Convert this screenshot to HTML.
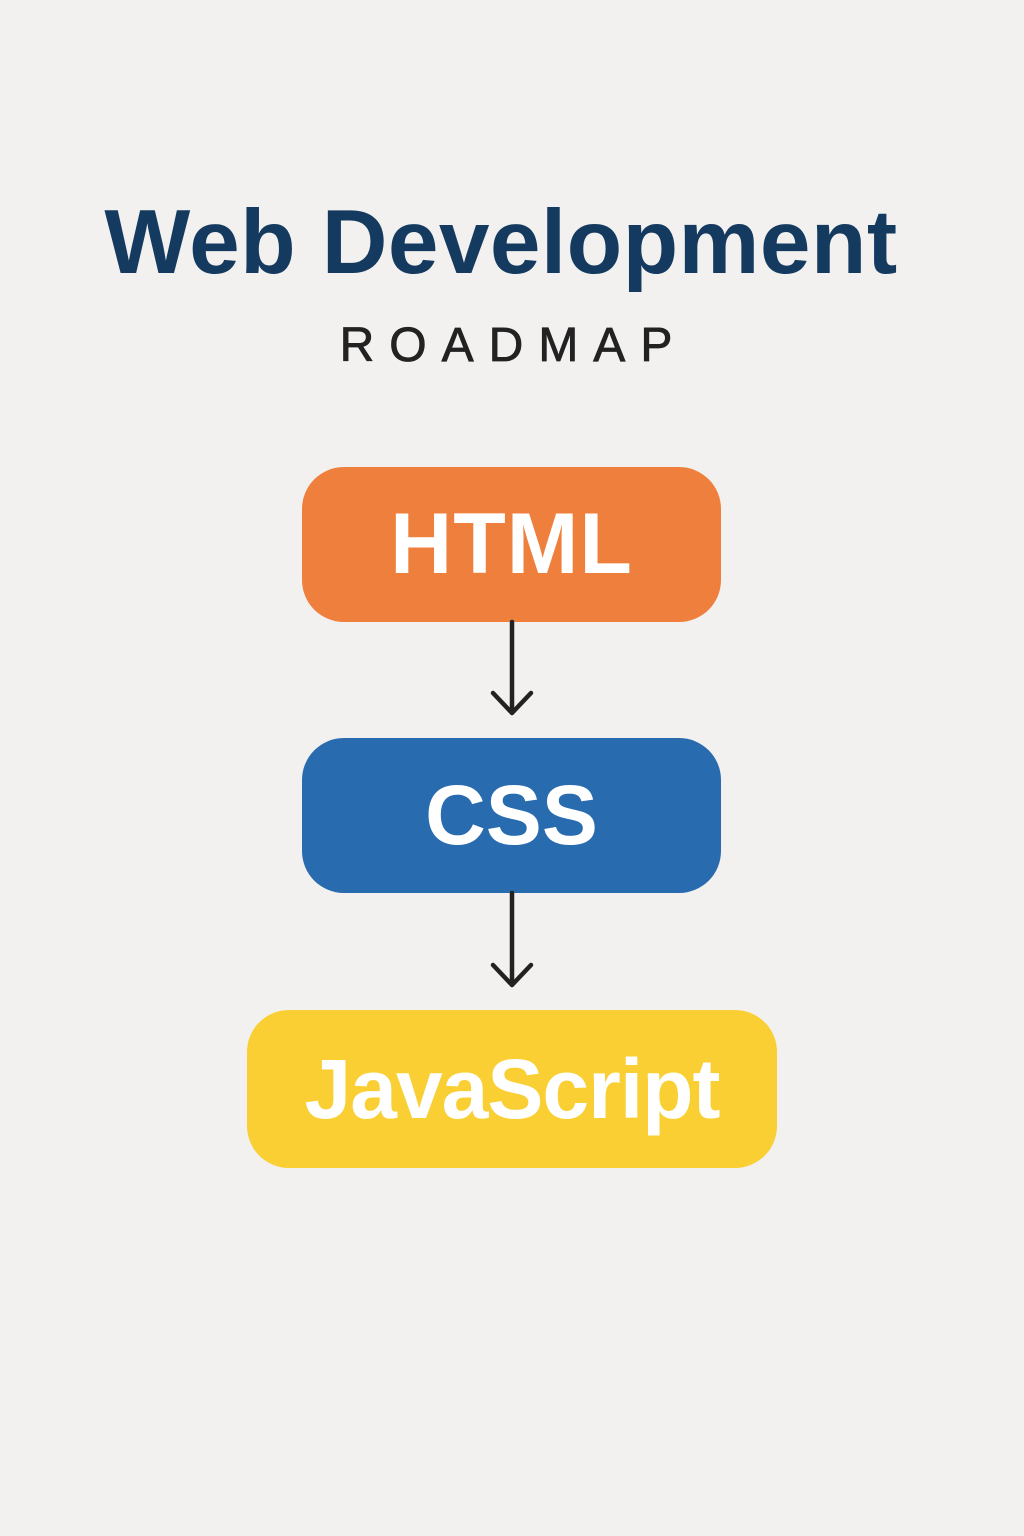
<!DOCTYPE html>
<html><head><meta charset="utf-8"><style>
html,body{margin:0;padding:0}
body{width:1024px;height:1536px;background:#f2f1ef;position:relative;overflow:hidden;font-family:"Liberation Sans",sans-serif}
.t{position:absolute;left:0;width:1024px;text-align:center}
.box{position:absolute;border-radius:42px;color:#fff;font-weight:bold;text-align:center;display:flex;align-items:center;justify-content:center}
</style></head><body>
<div class="t" style="top:188px;left:-11px;font-size:91px;font-weight:bold;color:#153a5f;line-height:110px;letter-spacing:0.4px">Web Development</div>
<div class="t" style="top:318px;left:-6px;font-size:48px;color:#222;line-height:56px;letter-spacing:15px;padding-left:15px;box-sizing:border-box;-webkit-text-stroke:0.8px #222">ROADMAP</div>
<div class="box" style="left:302px;top:467px;width:419px;height:155px;background:#ef7f3c;font-size:86px;letter-spacing:1px">HTML</div>
<div class="box" style="left:302px;top:738px;width:419px;height:155px;background:#286bae;font-size:84px">CSS</div>
<div class="box" style="left:247px;top:1010px;width:530px;height:158px;background:#f9cf33;font-size:84px;letter-spacing:-1px">JavaScript</div>
<svg style="position:absolute;left:0;top:0" width="1024" height="1536">
<g stroke="#222" stroke-width="4.5" fill="none" stroke-linecap="round" stroke-linejoin="round">
<path d="M512 622V713M493 693L512 713L531 693"/>
<path d="M512 893V985M493 965L512 985L531 965"/>
</g></svg>
</body></html>
